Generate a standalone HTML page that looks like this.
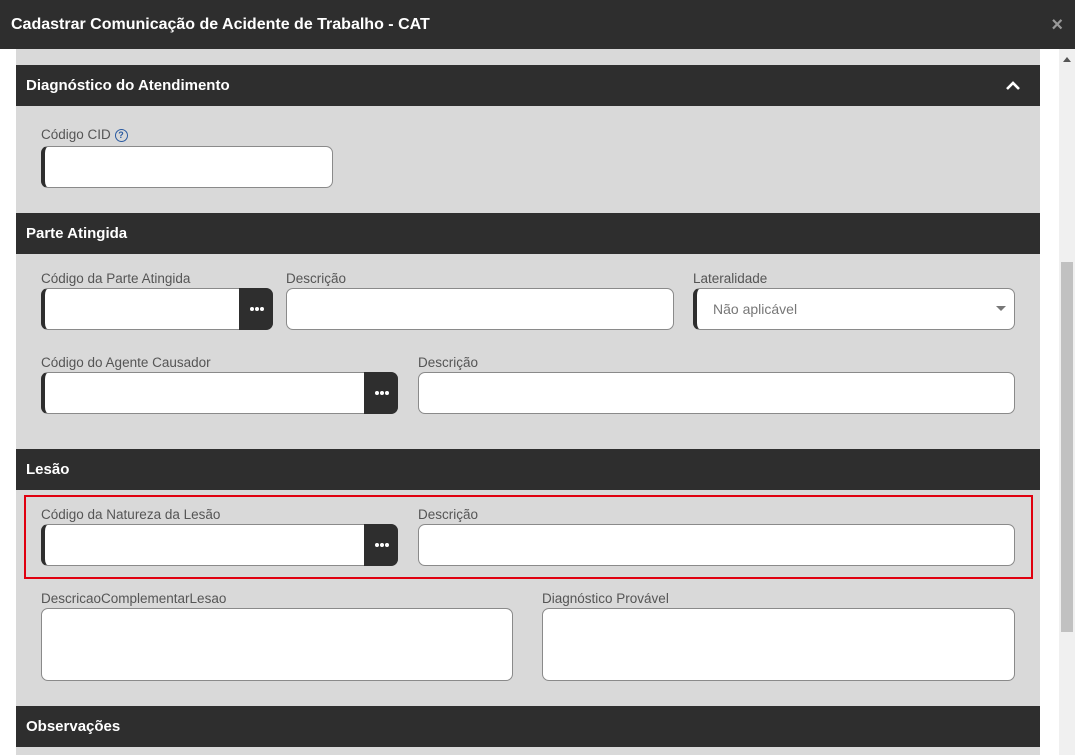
<!DOCTYPE html>
<html><head><style>
*{box-sizing:border-box;margin:0;padding:0}
body{width:1075px;height:755px;overflow:hidden;background:#fff;font-family:"Liberation Sans",Arial,sans-serif;position:relative}
.a{position:absolute}
.hdr{left:0;top:0;width:1075px;height:49px;background:#2e2e2e;color:#fff;font-weight:bold;font-size:16px;line-height:49px;padding-left:11px}
.bg{left:16px;top:49px;width:1024px;height:706px;background:#d9d9d9}
.sec{left:16px;width:1024px;height:41px;background:#2e2e2e;color:#fff;font-weight:bold;font-size:15px;line-height:41px;padding-left:10px}
.lbl{font-size:13.5px;color:#555}
.in{background:#fff;border:1px solid #8a8a8a;border-radius:7px;height:42px}
.req{border-left:4px solid #2e2e2e}
.btn{background:#2e2e2e;border-radius:0 7px 7px 0;height:42px;width:34px}
.btn i{position:absolute;top:19px;width:4px;height:4px;border-radius:50%;background:#fff}
</style></head><body>
<div class="a hdr">Cadastrar Comunicação de Acidente de Trabalho - CAT</div>
<div class="a" style="right:12px;top:14px;color:#999;font-size:20px;font-weight:bold">×</div>
<div class="a bg"></div>
<div class="a" style="left:1059px;top:49px;width:16px;height:706px;background:#f0f0f0"></div>
<div class="a" style="left:1061px;top:262px;width:12px;height:370px;background:#c1c1c1"></div>
<div class="a" style="left:1063px;top:57px;width:0;height:0;border-left:4px solid transparent;border-right:4px solid transparent;border-bottom:5px solid #555"></div>

<div class="a sec" style="top:65px">Diagnóstico do Atendimento</div>
<svg class="a" style="left:1004px;top:80px" width="18" height="12"><path d="M3 9 L9 3 L15 9" stroke="#fff" stroke-width="2.6" fill="none"/></svg>
<div class="a lbl" style="left:41px;top:127px">Código CID <span style="display:inline-block;width:13px;height:13px;border:1.5px solid #2a5aa0;border-radius:50%;font-size:9px;color:#2a5aa0;text-align:center;line-height:10px;font-weight:bold;vertical-align:1px">?</span></div>
<div class="a in req" style="left:41px;top:146px;width:292px"></div>

<div class="a sec" style="top:213px">Parte Atingida</div>
<div class="a lbl" style="left:41px;top:271px">Código da Parte Atingida</div>
<div class="a in req" style="left:41px;top:288px;width:232px"></div>
<div class="a btn" style="left:239px;top:288px"><i style="left:11px"></i><i style="left:16px"></i><i style="left:21px"></i></div>
<div class="a lbl" style="left:286px;top:271px">Descrição</div>
<div class="a in" style="left:286px;top:288px;width:388px"></div>
<div class="a lbl" style="left:693px;top:271px">Lateralidade</div>
<div class="a in req" style="left:693px;top:288px;width:322px;font-size:14px;color:#777;line-height:40px;padding-left:16px">Não aplicável</div>
<div class="a" style="left:996px;top:306px;border-left:5px solid transparent;border-right:5px solid transparent;border-top:5px solid #777"></div>
<div class="a lbl" style="left:41px;top:355px">Código do Agente Causador</div>
<div class="a in req" style="left:41px;top:372px;width:357px"></div>
<div class="a btn" style="left:364px;top:372px"><i style="left:11px"></i><i style="left:16px"></i><i style="left:21px"></i></div>
<div class="a lbl" style="left:418px;top:355px">Descrição</div>
<div class="a in" style="left:418px;top:372px;width:597px"></div>

<div class="a sec" style="top:449px">Lesão</div>
<div class="a" style="left:24px;top:495px;width:1009px;height:84px;border:2px solid #e0000f"></div>
<div class="a lbl" style="left:41px;top:507px">Código da Natureza da Lesão</div>
<div class="a in req" style="left:41px;top:524px;width:357px"></div>
<div class="a btn" style="left:364px;top:524px"><i style="left:11px"></i><i style="left:16px"></i><i style="left:21px"></i></div>
<div class="a lbl" style="left:418px;top:507px">Descrição</div>
<div class="a in" style="left:418px;top:524px;width:597px"></div>
<div class="a lbl" style="left:41px;top:591px">DescricaoComplementarLesao</div>
<div class="a in" style="left:41px;top:608px;width:472px;height:73px"></div>
<div class="a lbl" style="left:542px;top:591px">Diagnóstico Provável</div>
<div class="a in" style="left:542px;top:608px;width:473px;height:73px"></div>

<div class="a sec" style="top:706px">Observações</div>
</body></html>
